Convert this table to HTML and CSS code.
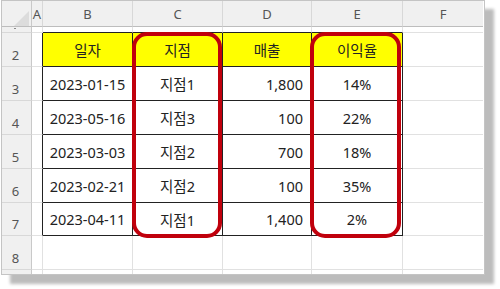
FILE: index.html
```html
<!DOCTYPE html>
<html lang="ko">
<head>
<meta charset="utf-8">
<link rel="stylesheet" href="styles.css">
</head>
<body>
<div class="frame">
  <div class="sheet">
    <div class="corner"><span class="tri"></span></div>
    <div class="ch">A</div><div class="ch">B</div><div class="ch">C</div><div class="ch">D</div><div class="ch">E</div><div class="ch last">F</div>

    <div class="rh r1"><span class="dot"></span></div>
    <div class="c"></div><div class="c et"></div><div class="c et"></div><div class="c et"></div><div class="c et"></div><div class="c last"></div>

    <div class="rh">2</div>
    <div class="c el"></div><div class="t th">일자</div><div class="t th">지점</div><div class="t th">매출</div><div class="t th">이익율</div><div class="c last"></div>

    <div class="rh">3</div>
    <div class="c el"></div><div class="t">2023-01-15</div><div class="t">지점1</div><div class="t num">1,800</div><div class="t">14%</div><div class="c last"></div>

    <div class="rh">4</div>
    <div class="c el"></div><div class="t">2023-05-16</div><div class="t">지점3</div><div class="t num">100</div><div class="t">22%</div><div class="c last"></div>

    <div class="rh">5</div>
    <div class="c el"></div><div class="t">2023-03-03</div><div class="t">지점2</div><div class="t num">700</div><div class="t">18%</div><div class="c last"></div>

    <div class="rh">6</div>
    <div class="c el"></div><div class="t">2023-02-21</div><div class="t">지점2</div><div class="t num">100</div><div class="t">35%</div><div class="c last"></div>

    <div class="rh">7</div>
    <div class="c el"></div><div class="t">2023-04-11</div><div class="t">지점1</div><div class="t num">1,400</div><div class="t">2%</div><div class="c last"></div>

    <div class="rh">8</div>
    <div class="c"></div><div class="c"></div><div class="c"></div><div class="c"></div><div class="c"></div><div class="c last"></div>

    <div class="rh cut"></div>
    <div class="c cut"></div><div class="c cut"></div><div class="c cut"></div><div class="c cut"></div><div class="c cut"></div><div class="c cut last"></div>
  </div>
  <div class="mark mark-c"></div>
  <div class="mark mark-e"></div>
</div>
</body>
</html>
```

FILE: styles.css
```css
* { box-sizing: border-box; }
html, body { margin: 0; padding: 0; background: #ffffff; }
body {
  width: 500px;
  height: 289px;
  overflow: hidden;
  font-family: "Noto Sans", "Noto Sans CJK KR", sans-serif;
}
.frame {
  position: relative;
  margin-left: 1px;
  width: 484px;
  height: 275px;
  border: 1px solid #c4c4c4;
  background: #ffffff;
  box-shadow: 9px 9px 3px #bcbcbc;
}
.sheet {
  display: grid;
  grid-template-columns: 30px 11px 90px 90px 89px 91px 80px;
  grid-template-rows: 26px 6px 34px 34px 34px 34px 34px 33px 34px 4px;
}
.corner {
  position: relative;
  background: #f0f0f0;
  border-right: 1px solid #c9c9c9;
  border-bottom: 1px solid #bdbdbd;
}
.tri {
  position: absolute;
  left: 12px;
  top: 10px;
  width: 15px;
  height: 15px;
  background: #dcdcdc;
  clip-path: polygon(100% 0, 100% 100%, 0 100%);
}
.ch {
  background: #f0f0f0;
  border-right: 1px solid #d8d8d8;
  border-bottom: 1px solid #bdbdbd;
  color: #555555;
  font-size: 13px;
  display: flex;
  align-items: center;
  justify-content: center;
  padding-top: 1px;
}
.rh {
  background: #f0f0f0;
  border-right: 1px solid #c9c9c9;
  border-bottom: 1px solid #d8d8d8;
  color: #555555;
  font-size: 13px;
  display: flex;
  align-items: flex-end;
  justify-content: center;
  padding: 0 2px 2px 0;
}
.rh.r1 { align-items: flex-start; padding: 0; }
.dot {
  display: block;
  width: 2px;
  height: 1px;
  margin: 1px 4px 0 0;
  background: #8a8a8a;
}
.c {
  border-right: 1px solid #e1e1e1;
  border-bottom: 1px solid #e1e1e1;
}
.c.cut, .rh.cut { border-bottom: none; }
.last { border-right: none; }
.el { border-right-color: #222222; }
.et { border-bottom-color: #222222; }
.t {
  border-right: 1px solid #222222;
  border-bottom: 1px solid #222222;
  color: #222222;
  font-size: 14.5px;
  display: flex;
  align-items: center;
  justify-content: center;
}
.th { background: #ffff00; }
.num { justify-content: flex-end; padding-right: 8px; }
.mark {
  position: absolute;
  top: 31px;
  width: 90px;
  height: 206px;
  border: 4px solid #c0000c;
  border-radius: 15px;
}
.mark-c { left: 130px; }
.mark-e { left: 308px; width: 91px; }
```
